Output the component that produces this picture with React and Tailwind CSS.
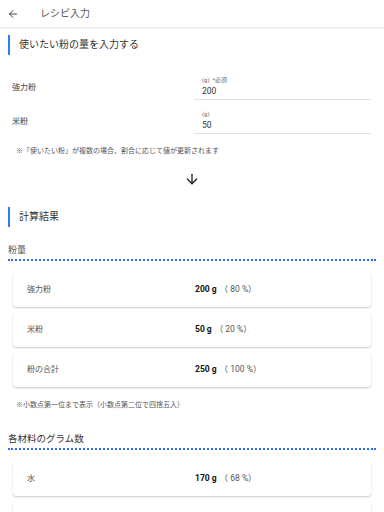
import React from "react";
import { ArrowLeft, ArrowDown } from "lucide-react";

const font = { fontFamily: 'Roboto, "Noto Sans CJK JP", "Noto Sans", sans-serif' };

function SectionTitle({ children, className = "" }) {
  return (
    <div className={`ml-2 flex h-5 items-center border-l-2 border-[#2f7cf6] pl-[9px] text-[10px] leading-none text-[#333] ${className}`}>
      {children}
    </div>
  );
}

function InputRow({ label, hint, required, value, className = "" }) {
  return (
    <div className={`flex items-center ${className}`}>
      <div className="w-[194px] pl-3 text-[8px] text-[#444]">{label}</div>
      <div className="w-[177px] border-b border-[#e2e2e2] pl-2 pb-[2px]">
        <div className="flex gap-[3px] text-[6px] leading-[8px] text-[#666]">
          <span>{hint}</span>
          {required && <span>*必須</span>}
        </div>
        <div className="mt-[2px] text-[8.5px] leading-[11px] text-[#333]">{value}</div>
      </div>
    </div>
  );
}

function Card({ label, grams, pct }) {
  return (
    <div className="mx-[13px] flex h-[35px] items-center rounded-[3px] bg-white shadow-[0_1px_2px_rgba(0,0,0,0.22)]">
      <div className="w-[182px] pl-[14px] text-[8px] text-[#555]">{label}</div>
      {grams && (
        <div className="text-[8.5px] text-[#555]">
          <span className="font-bold text-[#111]">{grams}</span>
          <span className="ml-[3px]">（ {pct} %）</span>
        </div>
      )}
    </div>
  );
}

export default function App() {
  return (
    <div className="h-[512px] w-[384px] overflow-hidden bg-white" style={font}>
      <div className="flex h-[27px] items-center shadow-[0_1px_2px_rgba(0,0,0,0.12)]">
        <ArrowLeft size={12} strokeWidth={2} className="ml-[7px] text-[#444]" />
        <span className="ml-[21px] text-[10px] text-[#555]">レシピ入力</span>
      </div>

      <SectionTitle className="mt-[8px]">使いたい粉の量を入力する</SectionTitle>

      <InputRow className="mt-[21px]" label="強力粉" hint="(g)" required value="200" />
      <InputRow className="mt-[10px]" label="米粉" hint="(g)" value="50" />

      <div className="mt-[12px] pl-4 text-[7px] leading-[10px] text-[#555]">
        ※「使いたい粉」が複数の場合、割合に応じて値が更新されます
      </div>

      <div className="mt-[15px] flex justify-center">
        <ArrowDown size={16} strokeWidth={2} className="text-[#222]" />
      </div>

      <SectionTitle className="mt-[20px]">計算結果</SectionTitle>

      <div className="mx-2 mt-[17px] border-b-2 border-dotted border-[#2f6ff6] pb-[3px] text-[9px] leading-[12px] text-[#555]">
        粉量
      </div>

      <div className="mt-[11px] flex flex-col gap-[5px]">
        <Card label="強力粉" grams="200 g" pct="80" />
        <Card label="米粉" grams="50 g" pct="20" />
        <Card label="粉の合計" grams="250 g" pct="100" />
      </div>

      <div className="mt-[13px] pl-4 text-[7px] leading-[10px] text-[#555]">
        ※小数点第一位まで表示（小数点第二位で四捨五入）
      </div>

      <div className="mx-2 mt-[22px] border-b-2 border-dotted border-[#2f6ff6] pb-[3px] text-[9.5px] leading-[13px] text-[#333]">
        各材料のグラム数
      </div>

      <div className="mt-[11px] flex flex-col gap-[6px]">
        <Card label="水" grams="170 g" pct="68" />
        <Card label="" grams="" pct="" />
      </div>
    </div>
  );
}
